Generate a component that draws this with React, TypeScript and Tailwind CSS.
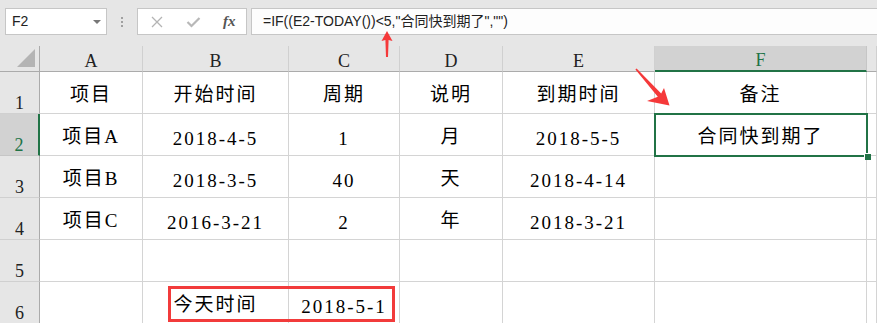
import React from "react";

const serif = "font-['Liberation_Serif','Noto_Sans_CJK_SC',serif]";

const columns = ["A", "B", "C", "D", "E", "F", ""];

type Row = { label: string; cells: string[]; selected?: boolean };

const rows: Row[] = [
  { label: "1", cells: ["项目", "开始时间", "周期", "说明", "到期时间", "备注", ""] },
  {
    label: "2",
    cells: ["项目A", "2018-4-5", "1", "月", "2018-5-5", "合同快到期了", ""],
    selected: true,
  },
  { label: "3", cells: ["项目B", "2018-3-5", "40", "天", "2018-4-14", "", ""] },
  { label: "4", cells: ["项目C", "2016-3-21", "2", "年", "2018-3-21", "", ""] },
  { label: "5", cells: ["", "", "", "", "", "", ""] },
  { label: "6", cells: ["", "今天时间", "2018-5-1", "", "", "", ""] },
];

function FormulaBar() {
  return (
    <div className="flex h-[46px] items-start pl-[5px] pt-[8px]">
      <div className="flex h-[27px] w-[102px] items-center justify-between border border-[#c6c6c6] bg-white pl-[6px] pr-[5px] font-['Liberation_Sans',sans-serif] text-[14px] text-[#222]">
        <span>F2</span>
        <span className="h-0 w-0 border-x-[4px] border-t-[4px] border-x-transparent border-t-[#777]" />
      </div>
      <div className="flex h-[27px] w-[30px] flex-col items-center justify-center gap-[2px]">
        <span className="h-[2px] w-[2px] bg-[#a0a0a0]" />
        <span className="h-[2px] w-[2px] bg-[#a0a0a0]" />
        <span className="h-[2px] w-[2px] bg-[#a0a0a0]" />
      </div>
      <div className="flex h-[27px] w-[110px] items-center border border-[#c6c6c6] bg-white">
        <svg width="14" height="12" viewBox="0 0 14 12" className="ml-[12px]">
          <path d="M2 1 L12 11 M12 1 L2 11" stroke="#b4b4b4" strokeWidth="1.3" fill="none" />
        </svg>
        <svg width="15" height="12" viewBox="0 0 15 12" className="ml-[22px]">
          <path d="M1.5 6 L5.5 10 L13.5 2" stroke="#b8b8b8" strokeWidth="2.2" fill="none" />
        </svg>
        <span className="ml-[22px] font-['Liberation_Serif',serif] text-[15px] font-bold italic text-[#555]">
          fx
        </span>
      </div>
      <div className="ml-[4px] flex h-[27px] flex-1 items-center border-y border-l border-[#c6c6c6] bg-[#fdfdfd] pl-[11px] font-['Liberation_Sans','Noto_Sans_CJK_SC',sans-serif] text-[14px] text-[#222]">
        =IF((E2-TODAY())&lt;5,"合同快到期了","")
      </div>
    </div>
  );
}

function Sheet() {
  return (
    <div className="relative">
      <div className="grid grid-cols-[40px_103px_146px_111px_103px_152px_212px_1fr] grid-rows-[26px_repeat(6,42px)]">
        <div className="relative border-b border-r border-b-[#ababab] border-r-[#ababab] bg-[#e6e6e6]">
          <svg width="20" height="20" viewBox="0 0 20 20" className="absolute bottom-[3px] right-[3px]">
            <polygon points="1,19 19,1 19,19" fill="#b4b4b4" />
          </svg>
        </div>
        {columns.map((c, i) =>
          c === "F" ? (
            <div
              key={i}
              className={`flex items-end justify-center border-b-2 border-r border-b-[#217346] border-r-[#c6c6c6] bg-[#d2d2d2] text-[18px] leading-[20px] text-[#217346] ${serif}`}
            >
              {c}
            </div>
          ) : (
            <div
              key={i}
              className={`flex items-end justify-center border-b border-r border-b-[#ababab] border-r-[#d0d0d0] bg-[#e6e6e6] text-[18px] leading-[20px] text-[#222] ${serif}`}
            >
              {c}
            </div>
          )
        )}
        {rows.map((r) => (
          <React.Fragment key={r.label}>
            {r.selected ? (
              <div
                className={`flex items-end justify-center border-b border-r-2 border-b-[#c6c6c6] border-r-[#217346] bg-[#d2d2d2] text-[18px] leading-[20px] text-[#217346] ${serif}`}
              >
                {r.label}
              </div>
            ) : (
              <div
                className={`flex items-end justify-center border-b border-r border-b-[#d0d0d0] border-r-[#ababab] bg-[#e6e6e6] text-[18px] leading-[20px] text-[#222] ${serif}`}
              >
                {r.label}
              </div>
            )}
            {r.cells.map((v, i) => {
              // digits sit a little lower in the original sheet font
              const pad = /^[0-9-]+$/.test(v) ? "pb-[4px]" : "pb-[6px]";
              return (
                <div
                  key={i}
                  className={`flex items-end justify-center whitespace-nowrap border-b border-r border-[#d4d4d4] bg-white text-[19px] leading-[24px] tracking-[2px] text-black ${pad} ${serif}`}
                >
                  {v}
                </div>
              );
            })}
          </React.Fragment>
        ))}
      </div>
      <div className="absolute left-[654px] top-[67px] h-[44px] w-[214px] border-2 border-[#217346]" />
      <div className="absolute left-[864px] top-[107px] h-[7px] w-[7px] border-l border-t border-white bg-[#217346]" />
      <div className="absolute left-[168px] top-[240px] h-[36px] w-[227px] border-[3px] border-[#f23b3b]" />
    </div>
  );
}

export default function App() {
  return (
    <div className="relative h-[323px] w-[877px] overflow-hidden bg-[#e6e6e6]">
      <FormulaBar />
      <Sheet />
      <svg
        width="877"
        height="323"
        viewBox="0 0 877 323"
        className="pointer-events-none absolute left-0 top-0"
      >
        <polygon
          points="387,31 392.5,41 388.6,40 388,57 386,57 385.4,40 381.5,41"
          fill="#f5393a"
        />
        <polygon
          points="669.5,105.5 647,101 657.8,96.8 635.4,69.6 636.6,68.4 661.2,93.6 664,88"
          fill="#f5393a"
        />
      </svg>
    </div>
  );
}
